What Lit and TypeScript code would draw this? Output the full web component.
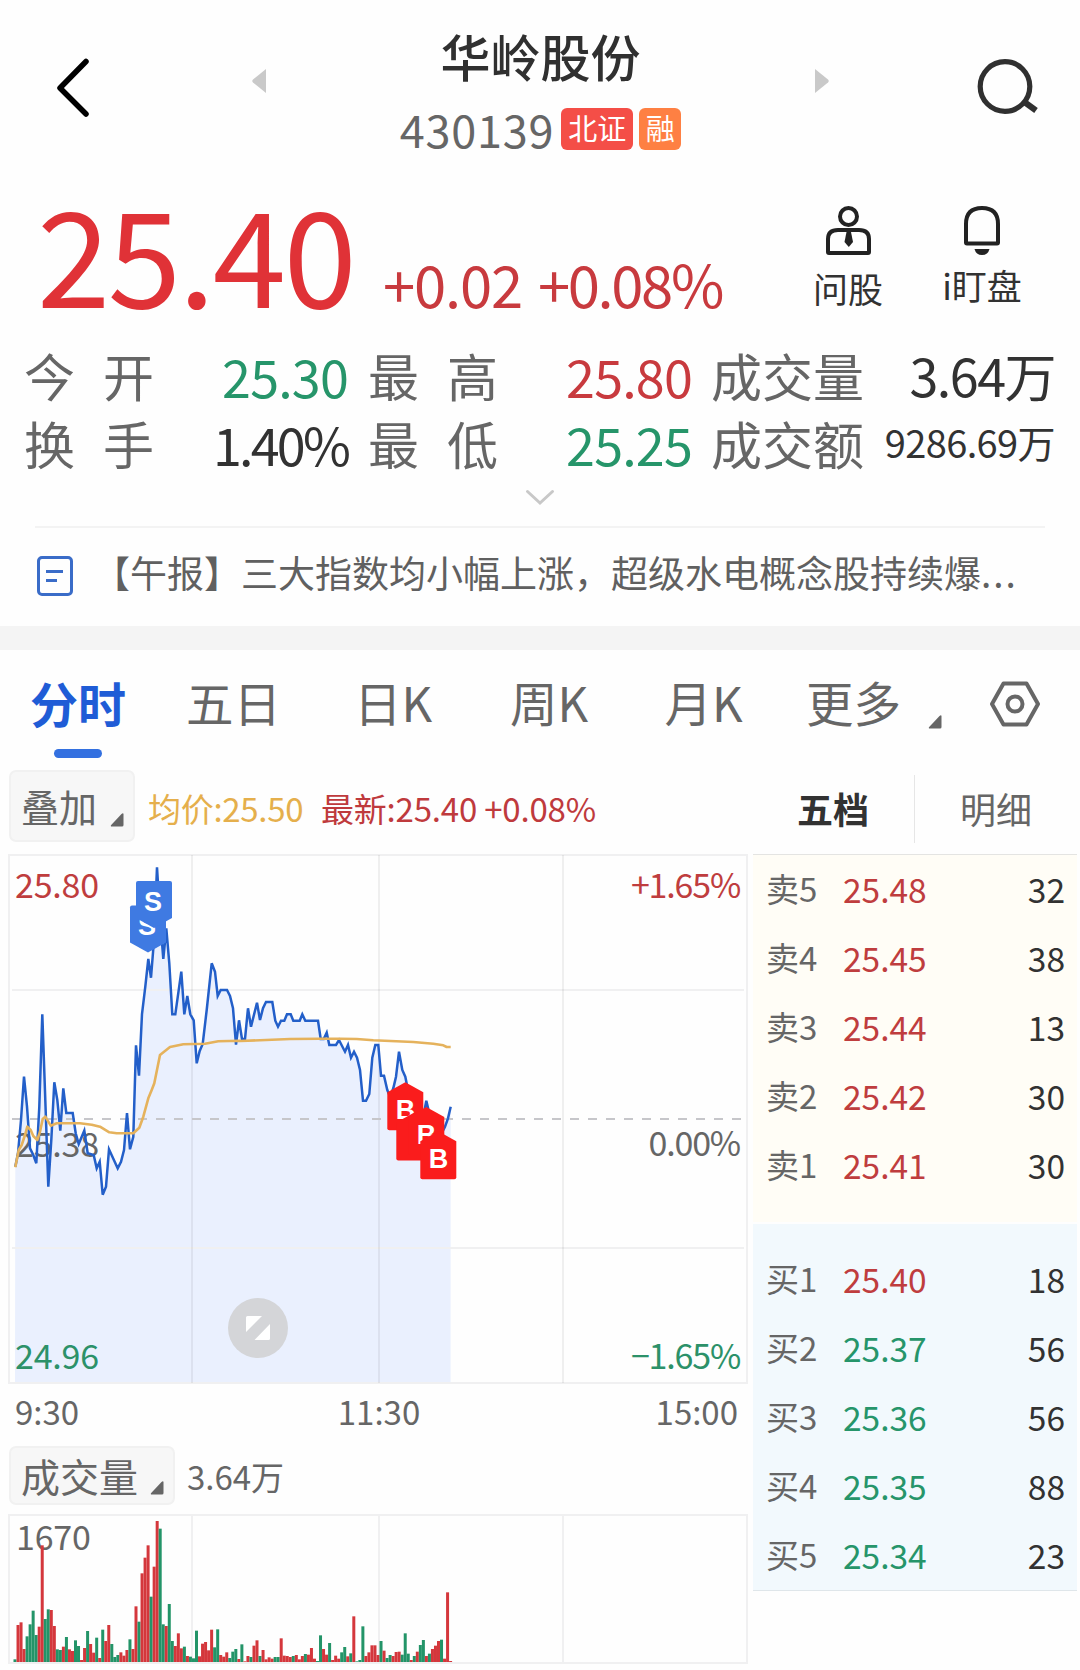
import { LitElement, html, svg, css } from "lit";
import { customElement } from "lit/decorators.js";

type Pt = [number, number];

/* Minute prices, in chart pixels. */
const PRICE_A: Pt[] = [
  [46, 980], [54, 940], [63, 840], [72, 710], [81, 800], [90, 925], [100, 945], [109, 970], [118, 800], [127, 523],
  [136, 780], [145, 1040], [154, 900], [163, 727], [172, 780], [181, 872], [190, 745], [199, 819], [218, 819],
  [227, 880], [236, 912], [253, 872], [263, 940], [281, 945], [290, 985], [299, 965], [308, 1064], [318, 1040],
  [327, 928], [353, 985], [363, 965], [372, 930], [381, 819], [390, 928], [400, 890], [408, 616], [417, 707],
  [426, 522], [436, 440], [445, 357], [453, 413], [462, 300], [471, 82], [480, 230], [490, 357], [499, 265],
  [508, 370], [517, 523], [526, 523], [544, 395], [553, 523], [562, 468], [571, 523], [581, 541], [590, 670],
  [599, 633], [608, 612], [620, 510], [635, 370], [645, 395], [653, 468], [662, 450], [681, 450], [690, 468],
  [699, 505], [708, 614], [717, 541], [726, 597], [735, 597],
];
const PRICE_B: Pt[] = [
  [24, 325], [33, 380], [51, 308], [60, 360], [69, 325], [78, 306], [97, 306], [106, 362], [114, 380], [123, 362],
  [133, 362], [141, 343], [152, 343], [160, 362], [179, 362], [187, 343], [196, 362], [234, 362], [242, 417],
  [251, 417], [260, 398], [268, 435], [288, 435], [297, 420], [315, 455], [324, 435], [333, 473], [342, 455],
  [351, 473], [360, 510], [369, 602], [378, 602], [388, 582], [397, 473], [406, 435], [415, 435], [423, 527],
  [432, 527], [442, 570], [450, 590], [460, 565], [468, 530], [477, 455], [487, 510], [496, 530], [505, 575],
  [530, 650], [550, 650], [559, 602], [568, 640], [600, 710], [615, 680], [624, 655], [632, 620],
];
const AVG_A: Pt[] = [
  [46, 982], [56, 930], [65, 915], [75, 885], [82, 860], [92, 870], [100, 888], [112, 900], [120, 875], [128, 837],
  [136, 830], [152, 857], [170, 850], [240, 850], [275, 854], [300, 860], [328, 877], [350, 880], [400, 880],
  [418, 863], [430, 830], [445, 775], [455, 750], [463, 730], [480, 645], [510, 621], [550, 613], [615, 611],
  [655, 604], [720, 602],
];
const AVG_B: Pt[] = [
  [0, 423], [150, 417], [240, 416], [300, 416], [350, 417], [400, 421], [520, 426], [580, 431], [610, 436],
  [620, 441], [632, 441],
];
const toChart = (a: Pt[], b: Pt[]) =>
  [...a.map(([x, y]) => [x / 3, y / 3 - 14]), ...b.map(([x, y]) => [240 + x / 3, y / 3 + 46])]
    .map(([x, y]) => `${x.toFixed(1)},${y.toFixed(1)}`)
    .join(" ");
const PRICE = toChart(PRICE_A, PRICE_B);
const AVERAGE = toChart(AVG_A, AVG_B);

/* Volume per minute: direction and height in thirds of a pixel. */
const VOLUME = (
  "g8 r111 r119 r39 g77 g113 g154 g81 r106 r350 g129 g158 r156 r108 g38 g36 r46 g75 r38 r33 g65 g48 r6 r42 g93 r54 r28 " +
  "g73 r12 g97 r63 r111 g54 g15 g21 r29 r19 r36 g68 r39 r167 g121 r266 r313 r350 g196 r286 r423 g400 g113 r108 g174 " +
  "g63 r48 r86 r41 g46 r18 g16 g11 g94 r17 r55 r60 r35 r97 g44 g98 r21 r16 r29 g12 g31 g39 r9 g53 r2 r18 g15 r49 r65 " +
  "g18 r36 r8 r14 r10 g15 g15 r71 r19 r18 r15 g18 r21 r8 r18 g24 r22 r42 r10 g3 g80 r39 r22 g57 r6 r19 r10 g29 g45 " +
  "r17 g26 r137 g2 g6 g107 r18 r29 r50 r50 r21 g63 r34 g12 g21 r18 r30 r31 g22 g86 g25 r6 g18 r31 g51 g66 r18 g25 " +
  "r39 r49 r63 g67 r10 r209 r3"
).split(" ");

const SELLS = [["卖5", "25.48", "32"], ["卖4", "25.45", "38"], ["卖3", "25.44", "13"], ["卖2", "25.42", "30"], ["卖1", "25.41", "30"]];
const BUYS = [["买1", "25.40", "18"], ["买2", "25.37", "56"], ["买3", "25.36", "56"], ["买4", "25.35", "88"], ["买5", "25.34", "23"]];

const corner = svg`<path d="M13.500 1.500v10.500q0 1.500-1.500 1.500H2q-2 0-.8-1.500L11.500 1Q13.500-.5 13.500 1.500z" fill="#666"/>`;

@customElement("minute-chart")
class MinuteChart extends LitElement {
  static styles = css`
    :host { display: block; }
    svg { display: block; }
    text { font-family: "Noto Sans CJK SC", sans-serif; font-size: 34px; letter-spacing: -0.200px; }
    .grid { stroke: #f0f0f1; stroke-width: 2; fill: none; }
    .red { fill: #bf3d3e; }
    .green { fill: #2c9169; }
    .gray { fill: #666; }
    .mark { font-family: "Liberation Sans", sans-serif; font-size: 27px; font-weight: 700; fill: #fff; text-anchor: middle; }
    .end { text-anchor: end; letter-spacing: -1.200px; }
  `;

  private sell(x: number, y: number) {
    return svg`<g transform="translate(${x} ${y})">
      <path d="M2 0H34Q36 0 36 2V37L18 47L0 37V2Q0 0 2 0z" fill="#3f7ae2"/>
      <text class="mark" x="17" y="29.500">S</text></g>`;
  }

  private buy(x: number, y: number, label: boolean) {
    return svg`<g transform="translate(${x} ${y})">
      <path d="M18 0L36 10V46Q36 48 34 48H2Q0 48 0 46V10z" fill="#fa1c1c"/>
      ${label ? svg`<text class="mark" x="18" y="36.500">B</text>` : null}</g>`;
  }

  render() {
    return html`<svg width="748" height="532" viewBox="0 0 748 532">
      <polygon points="15,529 ${PRICE} 450.600,529" fill="#eaf0fe"/>
      <g class="grid">
        <rect x="9" y="1" width="738" height="528"/>
        <path d="M12 136H744M12 394H744"/>
      </g>
      <path d="M192 1V529M379 1V529M563 1V529" stroke="#000" stroke-opacity=".06" stroke-width="2"/>
      <path d="M12 265H744" stroke="#c6c6ca" stroke-width="2" stroke-dasharray="9 9"/>
      <text class="gray" x="15" y="303">25.38</text>
      <polyline points=${PRICE} fill="none" stroke="#235fc9" stroke-width="2.500" stroke-linejoin="miter"/>
      <polyline points=${AVERAGE} fill="none" stroke="#e5b25c" stroke-width="2.600" stroke-linejoin="round"/>
      ${this.sell(130, 51.5)}${this.sell(136, 27)}
      ${this.buy(387.3, 228.3, true)}${this.buy(396.3, 258.5, false)}${this.buy(408.3, 253, true)}${this.buy(420.3, 277.3, true)}
      <circle cx="258" cy="474" r="30" fill="#d4d5d8"/>
      <path d="M247.500 462H262L246 478V463.500Q246 462 247.500 462zM270 470V484.500Q270 486 268.500 486H254.500z" fill="#fff"/>
      <text class="red" x="15" y="44">25.80</text>
      <text class="red end" x="740" y="44">+1.65%</text>
      <text class="gray end" x="740" y="302">0.00%</text>
      <text class="green" x="15" y="515">24.96</text>
      <text class="green end" x="740" y="515">−1.65%</text>
    </svg>`;
  }
}

@customElement("volume-chart")
class VolumeChart extends LitElement {
  static styles = css`
    :host { display: block; }
    svg { display: block; }
    text { font-family: "Noto Sans CJK SC", sans-serif; font-size: 34px; letter-spacing: -0.200px; fill: #666; }
    .grid { stroke: #f0f0f1; stroke-width: 2; fill: none; }
  `;

  render() {
    return html`<svg width="748" height="152" viewBox="0 0 748 152">
      <g class="grid">
        <rect x="9" y="1" width="738" height="148"/>
        <path d="M192 1V149M379 1V149M563 1V149"/>
      </g>
      <text x="16" y="36">1670</text>
      ${VOLUME.map((v, i) => {
        const h = Number(v.slice(1)) / 3;
        return svg`<rect x=${13.5 + i * 3.025} y=${148 - h} width="3" height=${h} fill=${v[0] === "r" ? "#d4373c" : "#239468"}/>`;
      })}
    </svg>`;
  }
}

@customElement("app-root")
class AppRoot extends LitElement {
  static styles = css`
    :host {
      display: block;
      width: 1080px;
      height: 1670px;
      overflow: hidden;
      background: #fefefe;
      color: #323232;
      font-family: "Noto Sans CJK SC", sans-serif;
      white-space: nowrap;
    }
    * { box-sizing: border-box; }
    svg { display: block; flex: none; }
    .red { color: #c83a3e; }
    .green { color: #26956a; }

    .header { display: grid; grid-template-columns: 252px 14px 549px 14px 251px; height: 165px; }
    .back { padding: 58px 0 0 56px; }
    .step { padding-top: 69px; }
    .search { padding: 57px 0 0 147px; }
    .heading { display: flex; flex-direction: column; align-items: center; padding-top: 25px; }
    .title { font-size: 50px; line-height: 60px; font-weight: 500; color: #303030; }
    .code-row { display: flex; height: 42px; margin-top: 23px; }
    .code { font-size: 45px; line-height: 41px; letter-spacing: 0.8px; color: #666; margin-right: 7px; }
    .badge { height: 42px; border-radius: 6px; color: #fff; font-size: 29px; line-height: 38px; text-align: center; }
    .market { width: 72px; background: #f44e47; margin-right: 6px; }
    .margin { width: 42px; background: #fe8043; }

    .quote { display: flex; height: 175px; }
    .prices { display: flex; align-items: baseline; width: 780px; padding: 20px 0 0 37px; }
    .last { width: 346px; font-size: 132px; line-height: 132px; letter-spacing: -2.500px; color: #e03237; }
    .change { width: 155px; font-size: 58px; line-height: 60px; letter-spacing: -1.200px; }
    .percent { font-size: 58px; line-height: 60px; letter-spacing: -2.400px; }
    .action { display: flex; flex-direction: column; align-items: center; width: 134px; padding: 40px 0 0 2px; font-size: 35px; line-height: 40px; }
    .action svg { margin-bottom: 11px; }
    .action.watch svg { margin-bottom: 8px; }

    .stats { display: grid; grid-template-columns: 130px 194px 20px 130px 194px 19px 153px 191px; grid-auto-rows: 68px; padding-left: 24px; font-size: 51px; line-height: 68px; }
    .key { display: flex; justify-content: space-between; color: #666; line-height: 70px; }
    .value { text-align: right; font-size: 52px; line-height: 72px; letter-spacing: -0.800px; }
    .value.tight { letter-spacing: -2.800px; }
    .value.volume-total { letter-spacing: -1.500px; line-height: 70px; }
    .value.small { font-size: 38px; line-height: 68px; letter-spacing: -0.600px; }
    .gap { width: 1px; }

    .expand { display: flex; justify-content: center; height: 50px; padding-top: 13px; }
    .news { display: flex; height: 100px; margin: 0 35px; border-top: 2px solid #f3f3f3; padding-top: 27px; color: #606060; font-size: 37px; line-height: 34px; }
    .news svg { margin-right: 18px; }
    .dots { letter-spacing: 2px; }
    .band { height: 24px; background: #f4f4f4; }

    .tabs { display: grid; grid-template-columns: 156px 155px 164px 148px 161px 139px 157px; height: 119px; font-size: 47.500px; line-height: 60px; color: #666; padding-top: 22px; }
    .tab { text-align: center; }
    .tab.active { color: #1f5cd6; font-weight: 700; font-size: 48px; }
    .indicator { width: 48px; height: 9px; margin: 17px auto 0; border-radius: 5px; background: #3370e0; }
    .settings { display: flex; padding: 9px 0 0 5px; }
    .settings .corner { margin: 34px 47px 0 0; }

    .main { display: grid; grid-template-columns: 753px 324px; }
    .info { display: flex; height: 85px; padding: 1px 0 0 9px; font-size: 33px; line-height: 77px; }
    .picker { display: flex; border: 2px solid #f1f1f1; border-radius: 7px; background: #f7f7f7; color: #666; }
    .overlay { width: 126px; height: 72px; padding-left: 10px; font-size: 38px; line-height: 67px; margin-right: 13px; }
    .overlay svg { margin: 41px 0 0 13px; }
    .average { color: #e5af4c; width: 173px; letter-spacing: -0.300px; }
    .latest { color: #bf3a3d; letter-spacing: -0.200px; }
    .times { display: grid; grid-template-columns: 280px 168px 275px; height: 60px; padding-left: 15px; font-size: 33px; line-height: 51px; color: #666; }
    .times .noon { text-align: center; }
    .times .close { text-align: right; }
    .volume-row { display: flex; height: 68px; padding-left: 9px; color: #666; font-size: 33px; line-height: 60px; }
    .volume { width: 166px; height: 59px; padding-left: 10px; font-size: 39px; line-height: 55px; margin-right: 12px; }
    .volume svg { margin: 33px 0 0 12px; }

    .modes { display: flex; height: 85px; padding-top: 6px; font-size: 36px; line-height: 66px; }
    .five { width: 162px; padding-left: 44px; height: 68px; border-right: 1px solid #e6e6e6; font-weight: 700; }
    .detail { padding-left: 45px; color: #666; }
    .sells { height: 368px; background: #fffdf6; border-top: 1px solid #e4e4e2; }
    .buys { height: 367px; margin-top: 2px; padding-top: 21px; background: #f2f9fd; border-bottom: 1px solid #dfe6ea; }
    .level { display: grid; grid-template-columns: 77px 120px 1fr; height: 69px; padding: 0 12px 0 13px; font-size: 33.500px; line-height: 67px; }
    .level .name { color: #666; font-size: 33px; }
    .level .amount { text-align: right; }
    .level .red { color: #bf3d3e; }
  `;

  private corner() {
    return html`<svg class="corner" width="14" height="14" viewBox="0 0 14 14">${corner}</svg>`;
  }

  private level(row: string[]) {
    return html`<div class="level">
      <span class="name">${row[0]}</span>
      <span class=${Number(row[1]) > 25.38 ? "red" : "green"}>${row[1]}</span>
      <span class="amount">${row[2]}</span>
    </div>`;
  }

  private key(text: string) {
    return html`<div class="key">${[...text].map((c) => html`<span>${c}</span>`)}</div>`;
  }

  render() {
    return html`
      <div class="header">
        <div class="back">
          <svg width="36" height="60" viewBox="0 0 36 60"><path d="M30 3.500L4 30L30 56" fill="none" stroke="#000" stroke-width="5.500" stroke-linecap="round" stroke-linejoin="round"/></svg>
        </div>
        <div class="step"><svg width="14" height="24" viewBox="0 0 14 24"><path d="M14 0V24L1 13.500Q-.5 12 1 10.500z" fill="#c9c9c9"/></svg></div>
        <div class="heading">
          <div class="title">华岭股份</div>
          <div class="code-row">
            <span class="code">430139</span>
            <span class="badge market">北证</span>
            <span class="badge margin">融</span>
          </div>
        </div>
        <div class="step"><svg width="14" height="24" viewBox="0 0 14 24"><path d="M0 0V24L13 13.500Q14.500 12 13 10.500z" fill="#c9c9c9"/></svg></div>
        <div class="search">
          <svg width="64" height="60" viewBox="0 0 64 60" fill="none" stroke="#303030" stroke-width="5.200"><circle cx="29" cy="29.500" r="24.800"/><path d="M47 44L60 53.500" stroke-width="6"/></svg>
        </div>
      </div>

      <div class="quote">
        <div class="prices">
          <span class="last">25.40</span><span class="change red">+0.02</span><span class="percent red">+0.08%</span>
        </div>
        <div class="action">
          <svg width="48" height="52" viewBox="0 0 48 52" fill="none" stroke="#222" stroke-width="4"><circle cx="24.500" cy="11.500" r="8.500"/><path d="M4 47V34Q4 25 14 25H35Q45 25 45 34V47Q45 48 44 48H5Q4 48 4 47z"/><path d="M22.500 27H27L29 37L24.800 42L20.500 37z" fill="#222" stroke="none"/></svg>
          <span>问股</span>
        </div>
        <div class="action watch">
          <svg width="40" height="52" viewBox="0 0 40 52"><path d="M4 37.500V19Q4 3 20 3T36 19V37.500Q36 38.500 35 38.500H5Q4 38.500 4 37.500z" fill="none" stroke="#222" stroke-width="4"/><path d="M12.500 44H27.500Q26 50 20 50T12.500 44z" fill="#222"/></svg>
          <span>i盯盘</span>
        </div>
      </div>

      <div class="stats">
        ${this.key("今开")}<div class="value green">25.30</div><i class="gap"></i>
        ${this.key("最高")}<div class="value red">25.80</div><i class="gap"></i>
        <div class="key">成交量</div><div class="value volume-total">3.64万</div>
        ${this.key("换手")}<div class="value tight">1.40%</div><i class="gap"></i>
        ${this.key("最低")}<div class="value green">25.25</div><i class="gap"></i>
        <div class="key">成交额</div><div class="value small">9286.69万</div>
      </div>
      <div class="expand"><svg width="30" height="18" viewBox="0 0 30 18"><path d="M2.500 2.500L15 14L27.500 2.500" fill="none" stroke="#c8c8c8" stroke-width="3" stroke-linecap="round"/></svg></div>

      <div class="news">
        <svg width="40" height="44" viewBox="0 0 40 44" fill="none" stroke="#3a6cc8" stroke-width="3"><rect x="3.500" y="2.500" width="33" height="37" rx="3.500"/><path d="M11 16.500H28M11 25.500H22"/></svg>
        <span>【午报】三大指数均小幅上涨，超级水电概念股持续爆<span class="dots">...</span></span>
      </div>
      <div class="band"></div>

      <div class="tabs">
        <div class="tab active">分时<div class="indicator"></div></div>
        <div class="tab">五日</div>
        <div class="tab">日K</div>
        <div class="tab">周K</div>
        <div class="tab">月K</div>
        <div class="tab">更多</div>
        <div class="settings">
          ${this.corner()}
          <svg width="52" height="46" viewBox="0 0 52 46" fill="none" stroke="#666" stroke-width="4"><path d="M14.500 2.500H37.500L49 23L37.500 43.500H14.500L3 23z" stroke-linejoin="round"/><circle cx="26" cy="23" r="7.500"/></svg>
        </div>
      </div>

      <div class="main">
        <div>
          <div class="info">
            <div class="picker overlay">叠加${this.corner()}</div>
            <span class="average">均价:25.50</span>
            <span class="latest">最新:25.40 +0.08%</span>
          </div>
          <minute-chart></minute-chart>
          <div class="times"><span>9:30</span><span class="noon">11:30</span><span class="close">15:00</span></div>
          <div class="volume-row">
            <div class="picker volume">成交量${this.corner()}</div>
            <span>3.64万</span>
          </div>
          <volume-chart></volume-chart>
        </div>
        <div>
          <div class="modes"><div class="five">五档</div><div class="detail">明细</div></div>
          <div class="sells">${SELLS.map((r) => this.level(r))}</div>
          <div class="buys">${BUYS.map((r) => this.level(r))}</div>
        </div>
      </div>
    `;
  }
}
